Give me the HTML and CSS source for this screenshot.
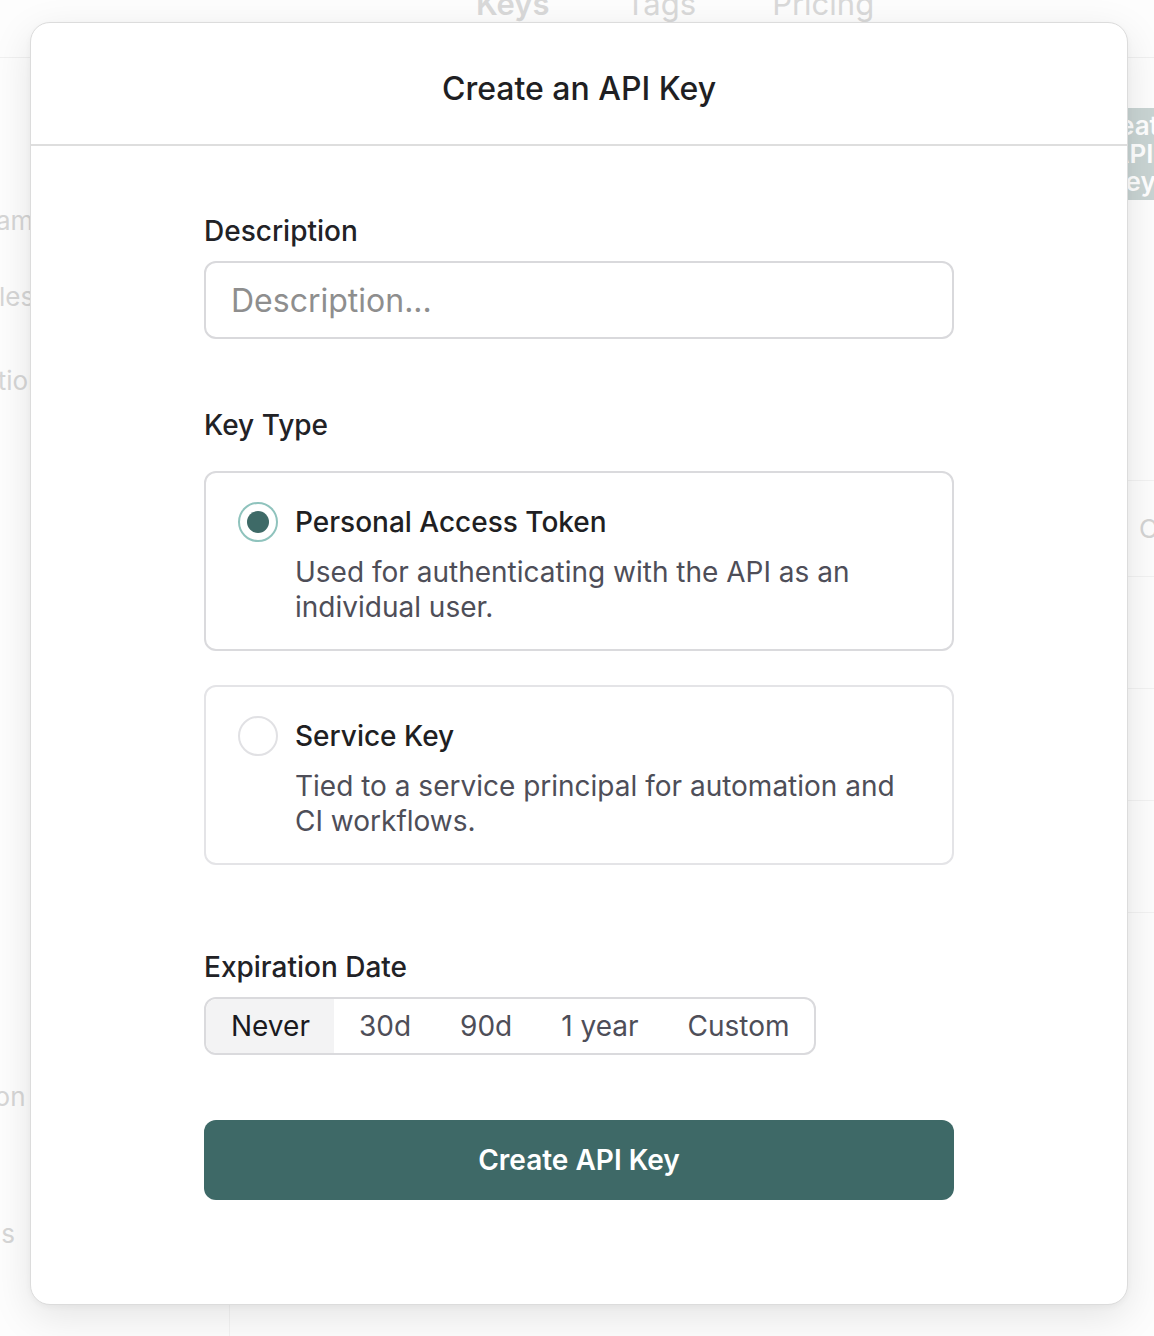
FILE: index.html
```html
<!DOCTYPE html>
<html lang="en">
<head>
<meta charset="utf-8">
<title>Create an API Key</title>
<link rel="stylesheet" href="styles.css">
</head>
<body>
<div class="page">
  <header class="topbar">
    <nav class="nav">
      <span class="nav-item nav-active">Keys</span>
      <span class="nav-item">Tags</span>
      <span class="nav-item">Pricing</span>
    </nav>
  </header>
  <div class="layout">
    <aside class="sidebar">
      <div class="side-item s1">Stream</div>
      <div class="side-item s2">Roles</div>
      <div class="side-item s3">Actions</div>
      <div class="side-item s4">Option</div>
      <div class="side-item s5">Logs</div>
    </aside>
    <main class="main">
      <div class="toolbar">
        <div class="bg-button">Create<br>API<br>Key</div>
      </div>
      <div class="table">
        <div class="row"><span class="cell">C</span></div>
        <div class="row"></div>
        <div class="row"></div>
        <div class="row"></div>
        <div class="row"></div>
      </div>
    </main>
  </div>
</div>

<div class="modal" role="dialog" aria-labelledby="modal-title">
  <div class="modal-header">
    <h1 id="modal-title" class="modal-title">Create an API Key</h1>
  </div>
  <div class="modal-body">
    <label class="field-label" for="desc">Description</label>
    <input id="desc" class="text-input" type="text" placeholder="Description...">

    <div class="field-label key-type-label">Key Type</div>
    <div class="option-card">
      <span class="radio radio-checked"><span class="radio-dot"></span></span>
      <div class="option-text">
        <div class="option-title">Personal Access Token</div>
        <div class="option-desc">Used for authenticating with the API as an individual user.</div>
      </div>
    </div>
    <div class="option-card option-second">
      <span class="radio"></span>
      <div class="option-text">
        <div class="option-title">Service Key</div>
        <div class="option-desc">Tied to a service principal for automation and CI workflows.</div>
      </div>
    </div>

    <div class="field-label exp-label">Expiration Date</div>
    <div class="segmented">
      <span class="seg seg-active">Never</span>
      <span class="seg">30d</span>
      <span class="seg">90d</span>
      <span class="seg">1 year</span>
      <span class="seg">Custom</span>
    </div>

    <button class="primary-btn" type="button">Create API Key</button>
  </div>
</div>
</body>
</html>
```

FILE: styles.css
```css
* { box-sizing: border-box; }

html, body {
  margin: 0;
  padding: 0;
  width: 1154px;
  height: 1336px;
  overflow: hidden;
  background: #ffffff;
  font-family: Inter, "Noto Sans", "Liberation Sans", sans-serif;
}

/* ---------- faded background page ---------- */
.page {
  width: 1154px;
  height: 1336px;
  background: #fdfdfd;
}

.topbar {
  height: 58px;
  border-bottom: 1px solid #f0f0f0;
  overflow: hidden;
}

.nav {
  display: flex;
  gap: 76px;
  margin-left: 476px;
  margin-top: -16px;
  font-size: 31px;
  line-height: 40px;
  color: #d9d9d9;
}

.nav-active { font-weight: 600; }

.layout {
  display: flex;
  height: 1278px;
}

.sidebar {
  width: 230px;
  flex: none;
  border-right: 1px solid #f3f3f3;
  padding-top: 145px;
  overflow: hidden;
}

.side-item {
  font-size: 26px;
  line-height: 36px;
  color: #d6d6d6;
  white-space: nowrap;
}

.s1 { margin-left: -54px; }
.s2 { margin-top: 40px; margin-left: -33px; }
.s3 { margin-top: 48px; margin-left: -35px; }
.s4 { margin-top: 680px; margin-left: -56px; }
.s5 { margin-top: 101px; margin-left: -45px; }

.main {
  flex: 1;
  min-width: 0;
  overflow: hidden;
}

.toolbar {
  display: flex;
  justify-content: flex-end;
  padding-top: 50px;
  margin-right: -24px;
}

.bg-button {
  width: 92px;
  background: #c9d4d3;
  color: #ffffff;
  font-size: 26px;
  font-weight: 600;
  line-height: 28px;
  text-align: center;
  padding: 4px 0 4px;
}

.table {
  margin-top: 280px;
}

.row {
  height: 112px;
  border-top: 1px solid #f2f2f2;
  display: flex;
  justify-content: flex-end;
  align-items: center;
}

.row:first-child { height: 96px; }

.cell {
  font-size: 26px;
  color: #d4d4d4;
  margin-right: -4px;
}

/* ---------- modal ---------- */
.modal {
  position: absolute;
  left: 30px;
  top: 22px;
  width: 1098px;
  height: 1283px;
  background: #ffffff;
  border: 1px solid #dcdcdc;
  border-radius: 20px;
  box-shadow: 0 12px 40px rgba(0, 0, 0, 0.10), 0 2px 6px rgba(0, 0, 0, 0.04);
}

.modal-header {
  height: 123px;
  padding-top: 10px;
  border-bottom: 2px solid #dedede;
  display: flex;
  align-items: center;
  justify-content: center;
}

.modal-title {
  margin: 0;
  font-size: 32px;
  font-weight: 500;
  color: #1f1f23;
}

.modal-body {
  width: 750px;
  margin: 0 auto;
  padding-top: 67px;
  display: flex;
  flex-direction: column;
}

.field-label {
  display: block;
  font-size: 28px;
  line-height: 36px;
  font-weight: 500;
  color: #222226;
  margin-bottom: 12px;
}

.text-input {
  display: block;
  width: 750px;
  height: 78px;
  border: 2px solid #d9d9dc;
  border-radius: 12px;
  padding: 0 25px;
  font-family: inherit;
  font-size: 32px;
  color: #222;
  background: #ffffff;
  outline: none;
}

.text-input::placeholder { color: #8e8e8e; }

.key-type-label {
  margin-top: 68px;
  margin-bottom: 28px;
}

.option-card {
  display: flex;
  align-items: flex-start;
  gap: 17px;
  height: 180px;
  border: 2px solid #dadadd;
  border-radius: 12px;
  padding: 31px 32px 0 32px;
}

.option-second {
  margin-top: 34px;
  border-color: #e4e4e7;
}

.radio {
  flex: none;
  width: 40px;
  height: 40px;
  border-radius: 50%;
  border: 2px solid #e1e1e4;
  display: flex;
  align-items: center;
  justify-content: center;
  margin-top: -2px;
}

.radio-checked { border-color: #8fc3bd; }

.radio-dot {
  width: 22px;
  height: 22px;
  border-radius: 50%;
  background: #3e6a67;
}

.option-title {
  font-size: 28px;
  line-height: 36px;
  font-weight: 500;
  color: #1f1f23;
  margin-bottom: 15px;
}

.option-desc {
  font-size: 28px;
  line-height: 35px;
  color: #4e4e58;
  max-width: 610px;
}

.exp-label { margin-top: 84px; }

.segmented {
  display: flex;
  align-self: flex-start;
  height: 58px;
  border: 2px solid #dadadd;
  border-radius: 12px;
  overflow: hidden;
}

.seg {
  display: flex;
  align-items: center;
  padding: 0 24.5px;
  font-size: 28px;
  color: #4e4e58;
}

.seg-active {
  padding-left: 25px;
  background: #f3f3f4;
  color: #1a1a1e;
  border-radius: 10px 0 0 10px;
}

.primary-btn {
  margin-top: 65px;
  height: 80px;
  width: 750px;
  border: none;
  border-radius: 12px;
  background: #3e6967;
  color: #ffffff;
  font-family: inherit;
  font-size: 28px;
  font-weight: 600;
  cursor: pointer;
}
```
